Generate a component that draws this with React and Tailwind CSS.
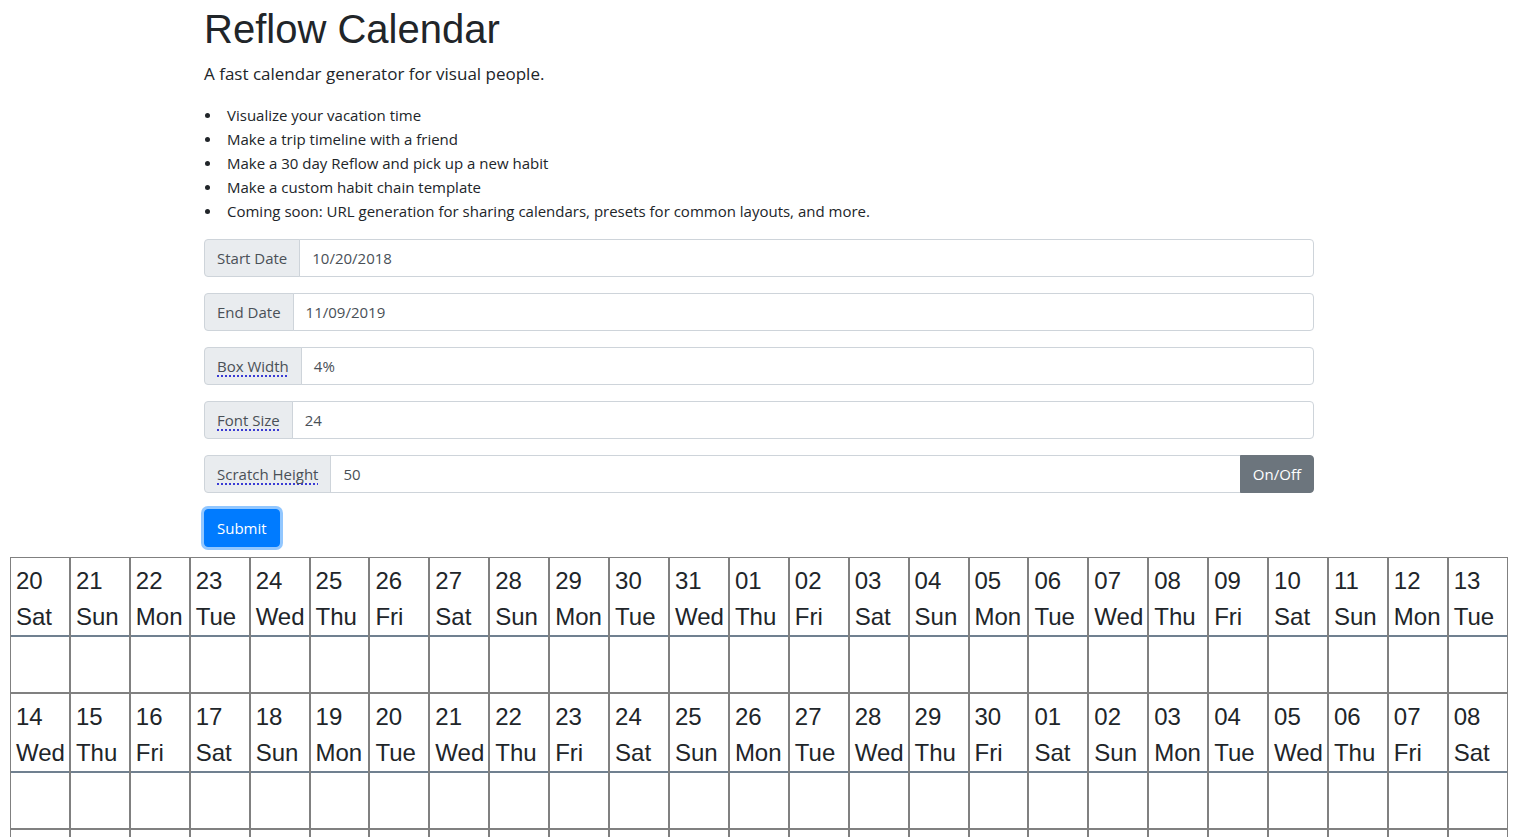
import React from "react";

const WD = ["Sun", "Mon", "Tue", "Wed", "Thu", "Fri", "Sat"];

function buildDays() {
  const out = [];
  const start = Date.UTC(2018, 9, 20);
  const end = Date.UTC(2019, 10, 9);
  for (let t = start; t <= end; t += 86400000) {
    const d = new Date(t);
    out.push({
      key: t,
      day: String(d.getUTCDate()).padStart(2, "0"),
      wd: WD[d.getUTCDay()],
    });
  }
  return out;
}

const sans = "font-['Open_Sans',sans-serif]";

function Group({ label, value, abbr, on }) {
  return (
    <div className="flex h-[38px] mb-[16px]">
      <div className="flex items-center px-[12px] bg-[#e9ecef] border border-[#ced4da] rounded-l-[4px] text-[#495057] text-[15px] whitespace-nowrap">
        <span
          className={
            abbr
              ? "underline decoration-dotted decoration-[#0000cc] underline-offset-[4px] [text-decoration-skip-ink:none]"
              : ""
          }
        >
          {label}
        </span>
      </div>
      <div
        className={
          "flex-1 flex items-center -ml-px px-[12px] border border-[#ced4da] text-[#495057] text-[15px] " +
          (on ? "" : "rounded-r-[4px]")
        }
      >
        {value}
      </div>
      {on && (
        <div className="flex items-center -ml-px px-[12px] bg-[#6c757d] border border-[#6c757d] rounded-r-[4px] text-white text-[15px]">
          On/Off
        </div>
      )}
    </div>
  );
}

export default function App() {
  const days = buildDays();
  const items = [
    "Visualize your vacation time",
    "Make a trip timeline with a friend",
    "Make a 30 day Reflow and pick up a new habit",
    "Make a custom habit chain template",
    "Coming soon: URL generation for sharing calendars, presets for common layouts, and more.",
  ];
  return (
    <div className={"h-[837px] overflow-hidden bg-white text-[#212529] " + sans}>
      <div className="w-[1140px] mx-auto px-[15px] pt-[5px]">
        <h1 className="font-['Liberation_Sans',Arial,sans-serif] text-[40px] leading-[48px] font-normal mb-[7px]">
          Reflow Calendar
        </h1>
        <p className="text-[17px] leading-[27px] font-normal mb-[16px]">
          A fast calendar generator for visual people.
        </p>
        <ul className="mb-[16px]">
          {items.map((t) => (
            <li key={t} className="flex items-center h-[24px] text-[15px]">
              <span className="w-[5px] h-[5px] rounded-full bg-[#212529] ml-[1px] mr-[17px] shrink-0" />
              <span>{t}</span>
            </li>
          ))}
        </ul>
        <Group label="Start Date" value="10/20/2018" />
        <Group label="End Date" value="11/09/2019" />
        <Group label="Box Width" value="4%" abbr />
        <Group label="Font Size" value="24" abbr />
        <Group label="Scratch Height" value="50" abbr on />
        <button className="h-[38px] px-[12px] bg-[#007bff] border border-[#007bff] rounded-[4px] text-white text-[15px] shadow-[0_0_0_3px_rgba(38,143,255,0.5)] mb-[10px]">
          Submit
        </button>
      </div>
      <div className="px-[10px] flex flex-wrap font-['Liberation_Sans',Arial,sans-serif] text-[24px] leading-[36px] text-[#212529]">
        {days.map((d) => (
          <div key={d.key} className="w-[4%] border border-[#808080]">
            <div className="h-[79px] pt-[5px] pl-[5px] border-b-2 border-[#708090] whitespace-nowrap">
              <div>{d.day}</div>
              <div>{d.wd}</div>
            </div>
            <div className="h-[55px]" />
          </div>
        ))}
      </div>
    </div>
  );
}
